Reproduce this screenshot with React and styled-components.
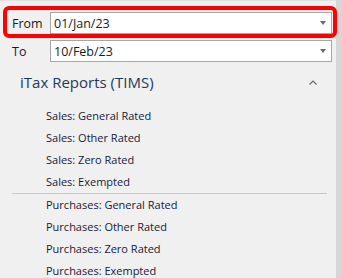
import React from "react";
import styled, { createGlobalStyle } from "styled-components";

const Global = createGlobalStyle`
  html, body { margin: 0; padding: 0; background: #f0f0f0; }
  body { font-family: "Open Sans", "Noto Sans", sans-serif; }
`;

const Frame = styled.div`
  position: relative;
  width: 342px;
  height: 278px;
  overflow: hidden;
  display: grid;
  grid-template-columns: 336px 6px;
  background: #f0f0f0;
`;

const Main = styled.div`
  display: flex;
  flex-direction: column;
  border-top: 1px solid #e2e2e2;
`;

const ScrollStrip = styled.div`
  background: #d6d6d6;
`;

const Form = styled.div`
  display: flex;
  flex-direction: column;
  gap: 6px;
  padding: 11px 0 0 12px;
`;

const Row = styled.div`
  display: flex;
  align-items: center;
  height: 22px;
`;

const Label = styled.span`
  width: 38px;
  font-size: 12.5px;
  color: #1b1b1b;
`;

const Combo = styled.div`
  box-sizing: border-box;
  width: 282px;
  height: 22px;
  border: 1px solid #a6a6a6;
  background: #ffffff;
  display: flex;
  align-items: center;
  justify-content: space-between;
  padding: 0 5px 0 3px;
  font-size: 12.5px;
  color: #1b1b1b;
`;

const Arrow = styled.span`
  width: 0;
  height: 0;
  border-left: 3.5px solid transparent;
  border-right: 3.5px solid transparent;
  border-top: 4px solid #6a6a6a;
`;

const Highlight = styled.div`
  position: absolute;
  left: 3px;
  top: 6px;
  width: 334px;
  height: 32px;
  box-sizing: border-box;
  border: 4px solid #ff0000;
  border-radius: 6px;
  pointer-events: none;
`;

const Section = styled.div`
  margin-top: 9px;
  display: flex;
  flex-direction: column;
`;

const SectionHeader = styled.div`
  display: flex;
  align-items: center;
  justify-content: space-between;
  height: 22px;
  padding: 0 19px 0 20px;
`;

const Title = styled.span`
  font-size: 15px;
  color: #1e395b;
`;

const Items = styled.div`
  margin-top: 12px;
  display: flex;
  flex-direction: column;
`;

const Item = styled.div`
  height: 22px;
  line-height: 22px;
  padding-left: 46px;
  font-size: 11px;
  color: #16203a;
`;

const Separator = styled.div`
  height: 1px;
  margin: 0 9px 0 12px;
  background: #c8c8c8;
`;

const Chevron = () => (
  <svg width="8" height="5" viewBox="0 0 8 5">
    <path d="M0.5 4.5 L4 1 L7.5 4.5" fill="none" stroke="#6a6a6a" strokeWidth="1.2" />
  </svg>
);

const sales = ["Sales: General Rated", "Sales: Other Rated", "Sales: Zero Rated", "Sales: Exempted"];
const purchases = [
  "Purchases: General Rated",
  "Purchases: Other Rated",
  "Purchases: Zero Rated",
  "Purchases: Exempted",
];

export default function App() {
  return (
    <>
      <Global />
      <Frame>
        <Main>
          <Form>
            <Row>
              <Label>From</Label>
              <Combo>
                <span>01/Jan/23</span>
                <Arrow />
              </Combo>
            </Row>
            <Row>
              <Label>To</Label>
              <Combo>
                <span>10/Feb/23</span>
                <Arrow />
              </Combo>
            </Row>
          </Form>
          <Section>
            <SectionHeader>
              <Title>iTax Reports (TIMS)</Title>
              <Chevron />
            </SectionHeader>
            <Items>
              {sales.map((s) => (
                <Item key={s}>{s}</Item>
              ))}
              <Separator />
              {purchases.map((s) => (
                <Item key={s}>{s}</Item>
              ))}
            </Items>
          </Section>
        </Main>
        <ScrollStrip />
        <Highlight />
      </Frame>
    </>
  );
}
